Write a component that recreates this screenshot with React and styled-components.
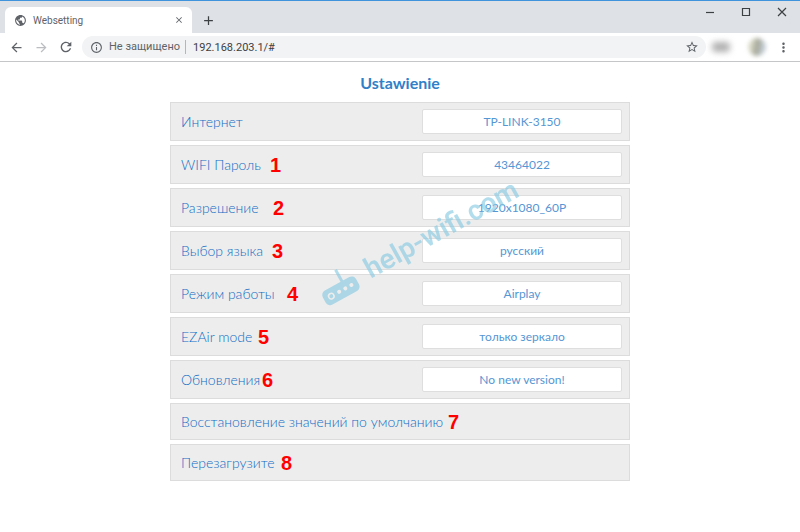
import React from "react";
import styled, { createGlobalStyle } from "styled-components";
import {
  MdAdd,
  MdArrowBack,
  MdArrowForward,
  MdClose,
  MdInfoOutline,
  MdMoreVert,
  MdPublic,
  MdRefresh,
  MdStarBorder,
} from "react-icons/md";

const GlobalStyle = createGlobalStyle`
  * {
    box-sizing: border-box;
  }
  body {
    margin: 0;
    background: #fff;
    font-family: Lato, "Open Sans", sans-serif;
  }
  button,
  input {
    margin: 0;
    padding: 0;
    border: 0;
    background: none;
    font: inherit;
    color: inherit;
  }
`;

const Chrome = styled.header`
  border-top: 1px solid #3f93dc;
  border-bottom: 1px solid #c4c6c8;
  font-family: Roboto, sans-serif;
`;

const TabStrip = styled.div`
  display: flex;
  height: 32px;
  padding-left: 5px;
  background: #dee1e6;
`;

const Tab = styled.div`
  display: flex;
  align-items: center;
  gap: 6px;
  width: 187px;
  margin-top: 6px;
  padding: 0 8px 0 9px;
  border-radius: 6px 6px 0 0;
  background: #fff;
  color: #5f6368;
`;

const TabTitle = styled.span`
  flex: 1;
  font-size: 10px;
`;

const IconButton = styled.button`
  display: flex;
  align-items: center;
  justify-content: center;
  flex: none;
  width: ${(props) => props.$width || 24}px;
  color: ${(props) => props.$color || "#5f6368"};
`;

const NewTab = styled(IconButton)`
  margin: 6px 0 0 4px;
  color: #3c4043;
`;

const WindowControls = styled.div`
  display: flex;
  height: 22px;
  margin-left: auto;
`;

const Toolbar = styled.div`
  display: flex;
  align-items: center;
  height: 28px;
  padding: 0 5px 0 4px;
`;

const AddressBar = styled.div`
  display: flex;
  align-items: center;
  flex: 1;
  height: 22px;
  margin: 0 6px 0 4px;
  padding: 0 2px 0 8px;
  border-radius: 11px;
  background: #f1f3f4;
  color: #5f6368;
  font-size: 11px;
`;

const Security = styled.button`
  display: flex;
  align-items: center;
  gap: 6px;
  padding-right: 5px;
  border-right: 1px solid #b4b7ba;
  line-height: 14px;
`;

const Url = styled.input`
  flex: 1;
  min-width: 0;
  padding-left: 7px;
  color: #3c4043;
  outline: none;
`;

const Extension = styled.span`
  width: 18px;
  height: 10px;
  margin-right: 18px;
  border-radius: 4px;
  background: #b0b0b0;
  filter: blur(3px);
`;

const Avatar = styled.span`
  width: 18px;
  height: 18px;
  margin-right: 5px;
  border-radius: 50%;
  background: linear-gradient(100deg, #dcdccb 20%, #a3a596 50%, #c3cdd5 80%);
  filter: blur(2px);
`;

const Page = styled.main`
  position: relative;
  max-width: 460px;
  margin: 0 auto;
`;

const Title = styled.h1`
  margin: 0;
  padding: 11px 0 9px;
  color: #2f80c8;
  font-size: 16px;
  line-height: 20px;
  text-align: center;
`;

const Settings = styled.div`
  display: flex;
  flex-direction: column;
  gap: 4px;
`;

const Row = styled.div`
  position: relative;
  display: flex;
  align-items: center;
  justify-content: space-between;
  height: ${(props) => (props.$plain ? 37 : 39)}px;
  padding: 0 7px 0 10px;
  border: 1px solid #dcdcdc;
  background: #ededed;
  color: #0f6cc4;
  font-size: 14px;
  font-weight: 300;
  line-height: 16px;
`;

const Value = styled.input`
  width: 200px;
  height: 25px;
  border: 1px solid #dedede;
  border-radius: 2px;
  background: #fff;
  color: #5596d4;
  font-size: 12px;
  font-weight: 400;
  text-align: center;
`;

const Action = styled.button`
  flex: 1;
  height: 100%;
  text-align: left;
`;

/* numbered callouts pinned over the rows */
const Marker = styled.span`
  position: absolute;
  left: ${(props) => props.$x}px;
  color: #f00;
  font: bold 20px/20px "Liberation Sans", sans-serif;
`;

const Watermark = styled.div`
  position: absolute;
  top: 160px;
  left: 137px;
  display: flex;
  align-items: center;
  gap: 12px;
  color: #8acbe2;
  font: 600 28px/40px Roboto, sans-serif;
  white-space: nowrap;
  opacity: 0.65;
  transform: rotate(-29deg);
  pointer-events: none;
`;

const settings = [
  { id: "internet", label: "Интернет", value: "TP-LINK-3150" },
  { id: "password", label: "WIFI Пароль", value: "43464022", mark: 1, x: 99 },
  { id: "resolution", label: "Разрешение", value: "1920x1080_60P", mark: 2, x: 102 },
  { id: "language", label: "Выбор языка", value: "русский", mark: 3, x: 101 },
  { id: "mode", label: "Режим работы", value: "Airplay", mark: 4, x: 116 },
  { id: "ezair", label: "EZAir mode", value: "только зеркало", mark: 5, x: 87 },
  { id: "updates", label: "Обновления", value: "No new version!", mark: 6, x: 91 },
];

const actions = [
  { label: "Восстановление значений по умолчанию", mark: 7, x: 277 },
  { label: "Перезагрузите", mark: 8, x: 110 },
];

const Router = () => (
  <svg width="40" height="36" viewBox="0 0 40 36" fill="currentColor" aria-hidden="true">
    <path d="M24 2h3v14h-3z" />
    <path
      fillRule="evenodd"
      d="M6 15h28a5 5 0 0 1 5 5v6a5 5 0 0 1-5 5H6a5 5 0 0 1-5-5v-6a5 5 0 0 1 5-5zM9 19.500a3.500 3.500 0 1 0 0 7a3.500 3.500 0 1 0 0-7zM9 21a2 2 0 1 1 0 4a2 2 0 1 1 0-4zM18 21a2 2 0 1 0 0 4a2 2 0 1 0 0-4zM25 21a2 2 0 1 0 0 4a2 2 0 1 0 0-4zM32 21a2 2 0 1 0 0 4a2 2 0 1 0 0-4z"
    />
  </svg>
);

const WindowIcon = ({ d }) => (
  <svg width="10" height="10" viewBox="0 0 10 10" fill="none" stroke="#3c4043" strokeWidth="1.200">
    <path d={d} />
  </svg>
);

const Browser = () => (
  <Chrome>
    <TabStrip>
      <Tab>
        <MdPublic size={13} />
        <TabTitle>Websetting</TabTitle>
        <IconButton $width={10} aria-label="Close tab">
          <MdClose size={10} />
        </IconButton>
      </Tab>
      <NewTab aria-label="New tab">
        <MdAdd size={15} />
      </NewTab>
      <WindowControls>
        <IconButton $width={36} aria-label="Minimize">
          <WindowIcon d="M1 5.500h8" />
        </IconButton>
        <IconButton $width={36} aria-label="Maximize">
          <WindowIcon d="M1.500 1.500h7v7h-7z" />
        </IconButton>
        <IconButton $width={36} aria-label="Close">
          <WindowIcon d="M1 1l8 8M9 1l-8 8" />
        </IconButton>
      </WindowControls>
    </TabStrip>
    <Toolbar>
      <IconButton aria-label="Back">
        <MdArrowBack size={15} />
      </IconButton>
      <IconButton $color="#bbbdc0" $width={26} aria-label="Forward">
        <MdArrowForward size={15} />
      </IconButton>
      <IconButton aria-label="Reload">
        <MdRefresh size={16} />
      </IconButton>
      <AddressBar>
        <Security>
          <MdInfoOutline size={13} />
          Не защищено
        </Security>
        <Url aria-label="Address" defaultValue="192.168.203.1/#" />
        <IconButton aria-label="Bookmark">
          <MdStarBorder size={14} />
        </IconButton>
      </AddressBar>
      <Extension />
      <Avatar />
      <IconButton aria-label="Menu">
        <MdMoreVert size={15} />
      </IconButton>
    </Toolbar>
  </Chrome>
);

const App = () => (
  <>
    <GlobalStyle />
    <Browser />
    <Page>
      <Title>Ustawienie</Title>
      <Settings>
        {settings.map(({ id, label, value, mark, x }) => (
          <Row key={id}>
            <label htmlFor={id}>{label}</label>
            <Value id={id} defaultValue={value} />
            {mark && <Marker $x={x}>{mark}</Marker>}
          </Row>
        ))}
        {actions.map(({ label, mark, x }) => (
          <Row key={label} $plain>
            <Action>{label}</Action>
            <Marker $x={x}>{mark}</Marker>
          </Row>
        ))}
      </Settings>
      <Watermark>
        <Router />
        help-wifi.com
      </Watermark>
    </Page>
  </>
);

export default App;
